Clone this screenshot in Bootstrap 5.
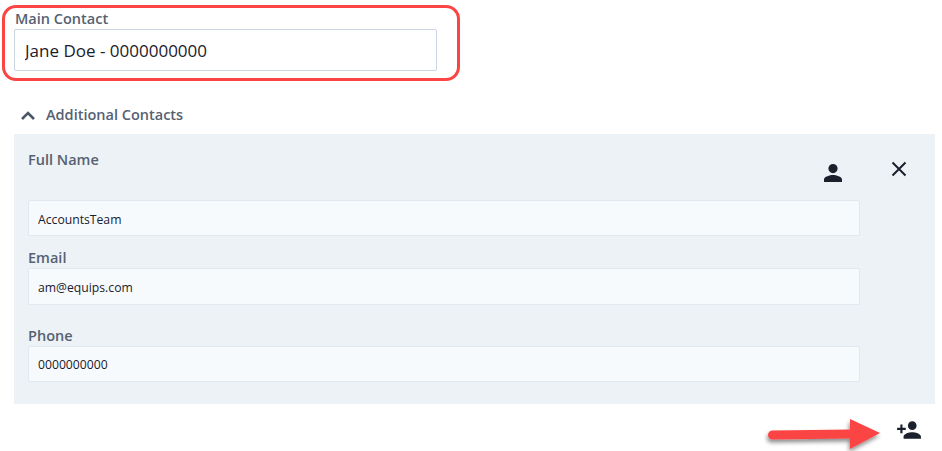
<!DOCTYPE html>
<html lang="en">
<head>
    <meta charset="UTF-8">
    <meta name="viewport" content="width=device-width, initial-scale=1.0">
    <title>Contacts</title>
    <link href="https://cdn.jsdelivr.net/npm/bootstrap@5.3.3/dist/css/bootstrap.min.css" rel="stylesheet">
    <script defer src="https://cdn.jsdelivr.net/npm/bootstrap@5.3.3/dist/js/bootstrap.bundle.min.js"></script>
    <style>
        body {
            font-family: "Open Sans", "Noto Sans", sans-serif;
            background: #fff;
            height: 451px;
            overflow: hidden;
            position: relative;
        }
        .main-wrap {
            margin: 5px 0 0 2px;
            width: 458px;
            height: 76px;
            border: 3px solid #fb4545;
            border-radius: 14px;
            padding: 1px 0 0 9px;
        }
        .field-label {
            color: #566172;
            font-size: 14.500px;
            font-weight: 600;
            line-height: 19px;
            margin: 0;
        }
        .main-label { padding-left: 1px; }
        .main-input {
            width: 423px;
            height: 42px;
            margin-top: 1px;
            padding: 0 10px;
            font-size: 17px;
            color: #1a202c;
            border: 1px solid #cbd5e0;
            border-radius: 2px;
            background: #fff;
            outline: none;
        }
        .toggle-row {
            margin: 23px 0 0 21px;
            height: 22px;
            gap: 11px;
            color: #566172;
            font-size: 14.500px;
            font-weight: 600;
        }
        .contact-panel {
            margin: 8px 0 0 14px;
            width: 921px;
            height: 270px;
            background: #edf2f7;
        }
        .fields-col {
            width: 846px;
            padding-left: 14px;
        }
        .sub-input {
            display: block;
            width: 832px;
            height: 36px;
            padding: 1px 9px 0;
            font-size: 12.200px;
            color: #1a202c;
            background: #f7fafc;
            border: 1px solid #e2e8f0;
            border-radius: 2px;
            outline: none;
        }
        .name-input { padding-top: 2px; }
        .email-input { height: 37px; }
        .name-label { padding-top: 16px; height: 66px; }
        .email-label { padding-top: 12px; height: 32px; }
        .phone-label { padding-top: 21px; height: 41px; }
        .icon-col svg { display: block; }
        .person-svg { margin: 26px 0 0 -39px; }
        .close-svg { margin: 25px 0 0 44px; }
        .add-row {
            padding: 13px 20px 0 0;
        }
        .arrow-mark {
            position: absolute;
            left: 764px;
            top: 412px;
        }
    </style>
</head>
<body>
    <div class="main-wrap">
        <label class="field-label main-label d-block">Main Contact</label>
        <input class="main-input d-block" type="text" value="Jane Doe - 0000000000">
    </div>

    <div class="toggle-row d-flex align-items-center">
        <svg width="14" height="9" viewBox="0 0 14 9"><path d="M1 8 7 2l6 6" fill="none" stroke="#4a5568" stroke-width="2.600"/></svg>
        <span>Additional Contacts</span>
    </div>

    <div class="contact-panel d-flex">
        <div class="fields-col">
            <div class="field-label name-label">Full Name</div>
            <input class="sub-input name-input" type="text" value="AccountsTeam">
            <div class="field-label email-label">Email</div>
            <input class="sub-input email-input" type="text" value="am@equips.com">
            <div class="field-label phone-label">Phone</div>
            <input class="sub-input" type="text" value="0000000000">
        </div>
        <div class="icon-col d-flex align-items-start">
            <svg class="person-svg" width="24" height="24" viewBox="0 0 24 24" fill="#1a202c"><path d="M12 13.200a4.600 4.600 0 1 0 0-9.200 4.600 4.600 0 0 0 0 9.200zm0 1.800c-3 0-9 1.500-9 4.500V22h18v-2.500c0-3-6-4.500-9-4.500z"/></svg>
            <svg class="close-svg" width="20" height="20" viewBox="0 0 20 20"><path d="M3.500 3.500l13 13M16.500 3.500l-13 13" stroke="#1a202c" stroke-width="2" fill="none"/></svg>
        </div>
    </div>

    <div class="add-row d-flex justify-content-end">
        <svg width="26" height="26" viewBox="0 0 24 24" fill="#1a202c"><path d="M15 12a4 4 0 1 0 0-8 4 4 0 0 0 0 8zm-9-2V7H4v3H1v2h3v3h2v-3h3v-2H6zm9 4c-2.700 0-8 1.300-8 4v2h16v-2c0-2.700-5.300-4-8-4z"/></svg>
    </div>

    <svg class="arrow-mark" width="124" height="44" viewBox="0 0 124 44">
        <defs><filter id="sh" x="-10%" y="-30%" width="120%" height="170%"><feDropShadow dx="-1" dy="3" stdDeviation="2" flood-color="#000" flood-opacity=".45"/></filter></defs>
        <path filter="url(#sh)" fill="#fb4545" d="M8.500 18.500 86 17.500V7L116 21 86 37V26.500L8.500 27.500a4.500 4.500 0 0 1 0-9z"/>
    </svg>
</body>
</html>
